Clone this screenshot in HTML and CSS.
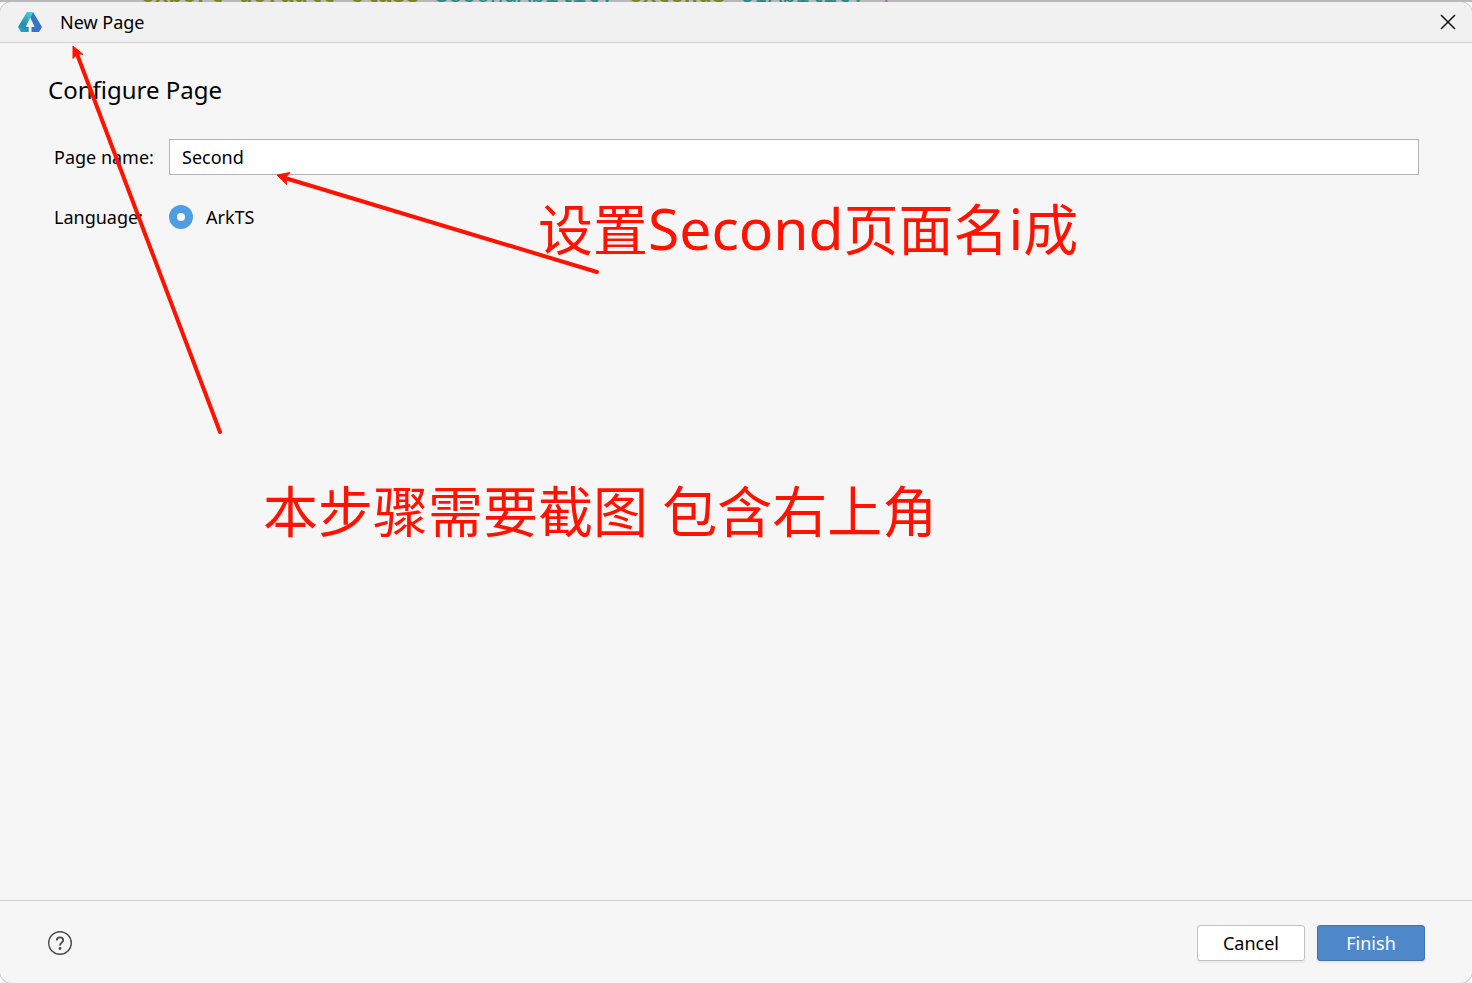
FILE: index.html
```html
<!DOCTYPE html>
<html lang="zh-CN">
<head>
    <meta charset="UTF-8">
    <meta name="viewport" content="width=device-width, initial-scale=1.0">
    <title>New Page</title>
    <link rel="stylesheet" href="styles.css">
</head>
<body>
    <!-- editor line showing above the dialog -->
    <div class="editor-line" aria-hidden="true">
        <span class="keyword">export</span>
        <span class="keyword">default</span>
        <span class="keyword">class</span>
        <span class="type">SecondAbility</span>
        <span class="keyword">extends</span>
        <span class="type">UIAbility</span>
        <span class="brace">{</span>
    </div>
    <form class="dialog">
        <header class="titlebar">
            <svg class="logo" viewBox="0 0 24 20" aria-hidden="true">
                <defs>
                    <linearGradient id="left" x1="0.8" y1="0" x2="0.2" y2="1">
                        <stop offset="0" stop-color="#43d3d8"/>
                        <stop offset="0.65" stop-color="#238ea8"/>
                        <stop offset="1" stop-color="#26a5d4"/>
                    </linearGradient>
                    <linearGradient id="right" x1="0" y1="0" x2="1" y2="1">
                        <stop offset="0" stop-color="#2c7cc4"/>
                        <stop offset="1" stop-color="#3c6fd8"/>
                    </linearGradient>
                </defs>
                <path fill="url(#left)" d="M9 0h6l-2.700 5.500L7.600 15h3.100v5H3L0 15z"/>
                <path fill="url(#right)" d="M15 0l9 15-3 5h-7.500v-5h3.200L12.300 5.500z"/>
            </svg>
            <h1 class="title">New Page</h1>
            <button type="button" class="close" aria-label="Close">
                <svg viewBox="0 0 16 16" aria-hidden="true"><path d="M1 1l14 14M15 1L1 15"/></svg>
            </button>
        </header>
        <main class="content">
            <h2 class="heading">Configure Page</h2>
            <div class="fields">
                <label for="page-name">Page name:</label>
                <input type="text" id="page-name" class="text-input" value="Second">
                <span id="language-label">Language:</span>
                <div class="options" role="radiogroup" aria-labelledby="language-label">
                    <input type="radio" id="arkts" class="radio" name="language" checked>
                    <label for="arkts">ArkTS</label>
                </div>
            </div>
        </main>
        <footer class="footer">
            <button type="button" class="help" aria-label="Help">
                <svg viewBox="0 0 24 24" aria-hidden="true">
                    <circle cx="12" cy="12" r="11.300"/>
                    <path d="M8.800 9.500c0-2 1.300-3.200 3.200-3.200s3.200 1.200 3.200 2.900c0 2.300-3.200 2.700-3.200 5.300"/>
                    <circle class="dot" cx="12" cy="17.500" r="1.400"/>
                </svg>
            </button>
            <button type="button" class="btn">Cancel</button>
            <button type="submit" class="btn btn-primary">Finish</button>
        </footer>
    </form>

    <!-- notes drawn over the dialog -->
    <svg class="arrows" aria-hidden="true">
        <line x1="220" y1="432" x2="77" y2="54"/>
        <path d="M73 46l10 8.500-5.500-1-4.500 5z"/>
        <line x1="597" y1="272" x2="285" y2="178"/>
        <path d="M277 175l13-2.500-4.500 5 1.200 7z"/>
    </svg>
    <p class="note note-name">设置<span class="latin">Second</span>页面名<span class="latin">i</span>成</p>
    <p class="note note-step">本步骤需要截图 包含右上角</p>
</body>
</html>
```
FILE: styles.css
```css
* {
    box-sizing: border-box;
}
body {
    margin: 0;
    min-height: 100vh;
    display: flex;
    flex-direction: column;
    position: relative;
    background-color: #fff;
    color: #000;
    font-family: "Noto Sans", "Noto Sans CJK SC", sans-serif;
    font-size: 18px;
    line-height: 24px;
}
.editor-line {
    display: flex;
    align-items: flex-end;
    gap: 15px;
    height: 2px;
    padding-left: 141px;
    overflow: hidden;
    background-color: #b8b8b8;
    font-family: "Liberation Mono", monospace;
    font-size: 23px;
    font-weight: bold;
    line-height: 12px;
}
.keyword {
    color: #7a8420;
}
.type {
    color: #26898c;
    font-weight: normal;
}
.brace {
    color: #b0609c;
    font-weight: normal;
}
.dialog {
    flex: 1;
    display: flex;
    flex-direction: column;
    background-color: #f6f6f6;
    border-radius: 12px;
    box-shadow: 0 0 0 1px #c8c8c8;
    clip-path: inset(0 -1px);
    overflow: hidden;
}
.titlebar {
    display: flex;
    align-items: center;
    height: 41px;
    padding: 0 16px 1px 18px;
    background-color: #f1f1f1;
    border-bottom: 1px solid #cfcfcf;
}
.logo {
    width: 24px;
    height: 20px;
    margin-right: 18px;
}
.title {
    flex: 1;
    margin: 0;
    font-size: 18px;
    font-weight: normal;
}
.close,
.help {
    padding: 0;
    border: none;
    background: none;
    cursor: pointer;
}
.close svg {
    display: block;
    width: 16px;
    height: 16px;
    stroke: #111;
    stroke-width: 1.5;
}
.content {
    flex: 1;
    padding: 30px 53px 30px 48px;
}
.heading {
    margin: 0 0 32px;
    font-size: 24px;
    font-weight: normal;
    line-height: 34px;
}
.fields {
    display: grid;
    grid-template-columns: 100px 1fr;
    gap: 24px 15px;
    align-items: center;
    padding-left: 6px;
}
.text-input {
    width: 100%;
    height: 36px;
    padding: 0 12px;
    border: 1px solid #b3b3b3;
    background-color: #fff;
    color: #000;
    font: inherit;
}
.options {
    display: flex;
    align-items: center;
    gap: 13px;
    height: 36px;
}
.radio {
    appearance: none;
    width: 24px;
    height: 24px;
    margin: 0;
    border: 8px solid #4f9ee3;
    border-radius: 50%;
    background-color: #fff;
}
.footer {
    display: flex;
    align-items: center;
    gap: 12px;
    padding: 24px 47px 22px 48px;
    border-top: 1px solid #cfcfcf;
}
.help {
    margin-right: auto;
}
.help svg {
    display: block;
    width: 24px;
    height: 24px;
    fill: none;
    stroke: #4a4a4a;
    stroke-width: 1.4;
}
.help path {
    stroke-width: 1.8;
}
.help .dot {
    fill: #4a4a4a;
    stroke: none;
}
.btn {
    width: 108px;
    height: 36px;
    padding: 0;
    border: 1px solid #c2c2c2;
    border-radius: 3px;
    background-color: #fff;
    box-shadow: 0 2px 1px #ebe9eb;
    color: #000;
    font: inherit;
    cursor: pointer;
}
.btn-primary {
    border-color: #4471b3;
    background-color: #4e88c9;
    color: #fff;
}
.arrows {
    position: absolute;
    top: 0;
    left: 0;
    width: 100%;
    height: 100%;
    pointer-events: none;
    fill: #ff1200;
    stroke: #ff1200;
}
.arrows line {
    stroke-width: 4;
    stroke-linecap: round;
}
.note {
    position: absolute;
    margin: 0;
    color: #ff1200;
    font-size: 55px;
    line-height: 80px;
    white-space: nowrap;
    pointer-events: none;
}
.latin {
    font-size: 57px;
}
.note-name {
    top: 188px;
    left: 538px;
}
.note-step {
    top: 471px;
    left: 263px;
}
```
